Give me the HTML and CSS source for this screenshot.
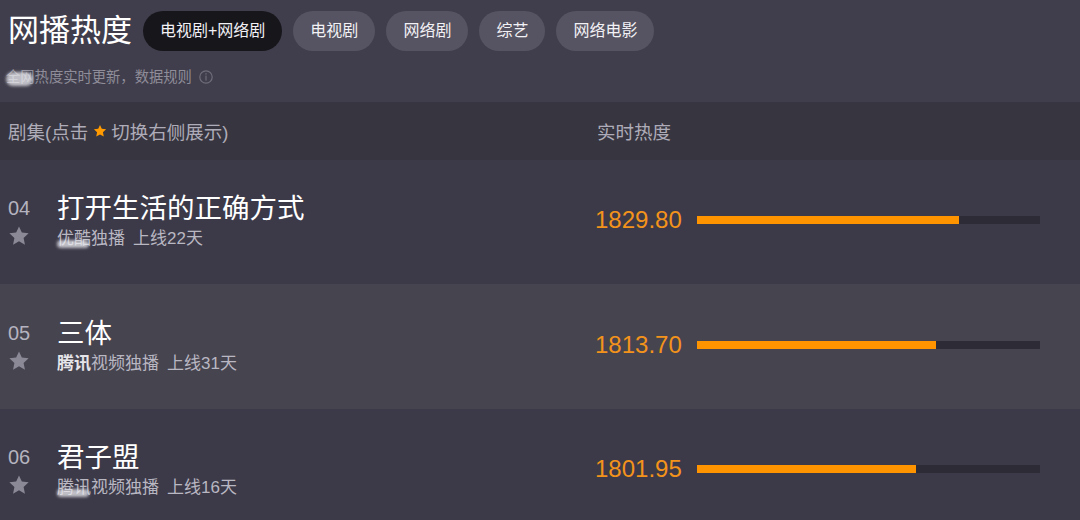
FILE: index.html
```html
<!DOCTYPE html>
<html lang="zh-CN">
<head>
  <meta charset="UTF-8">
  <title>网播热度</title>
  <link rel="stylesheet" href="styles.css">
</head>
<body>

  <div class="top">
    <div class="title-row">
      <h1>网播热度</h1>
      <div class="tabs">
        <span class="tab active">电视剧+网络剧</span>
        <span class="tab">电视剧</span>
        <span class="tab">网络剧</span>
        <span class="tab">综艺</span>
        <span class="tab">网络电影</span>
      </div>
    </div>
    <p class="note">
      <span class="smudge">全网</span>热度实时更新，数据规则
      <svg class="info" width="14" height="14" viewBox="0 0 14 14">
        <circle cx="7" cy="7" r="6.2" fill="none" stroke="#6f6d7a" stroke-width="1.2"/>
        <rect x="6.4" y="3.2" width="1.2" height="1.4" fill="#6f6d7a"/>
        <rect x="6.4" y="5.6" width="1.2" height="5" fill="#6f6d7a"/>
      </svg>
    </p>
  </div>

  <div class="thead">
    <div class="col-name">剧集(点击
      <svg class="mini-star" width="14" height="14" viewBox="0 0 24 24"><polygon points="12,1.5 15.1,8.3 22.5,9.1 17,14.1 18.5,21.5 12,17.8 5.5,21.5 7,14.1 1.5,9.1 8.9,8.3" fill="#ff9a00"/></svg>
      切换右侧展示)</div>
    <div class="col-heat">实时热度</div>
  </div>

  <div class="row">
    <div class="rank">
      <span class="num">04</span>
      <svg class="star" width="22" height="22" viewBox="0 0 24 24"><polygon points="12,1.5 15.1,8.3 22.5,9.1 17,14.1 18.5,21.5 12,17.8 5.5,21.5 7,14.1 1.5,9.1 8.9,8.3" fill="#8b8996"/></svg>
    </div>
    <div class="info-col">
      <div class="name">打开生活的正确方式</div>
      <div class="sub"><span class="smudge low">优酷</span>独播<span class="days">上线22天</span></div>
    </div>
    <div class="heat">
      <span class="value">1829.80</span>
      <div class="bar"><div class="fill" style="width: 76.4%"></div></div>
    </div>
  </div>

  <div class="row alt">
    <div class="rank">
      <span class="num">05</span>
      <svg class="star" width="22" height="22" viewBox="0 0 24 24"><polygon points="12,1.5 15.1,8.3 22.5,9.1 17,14.1 18.5,21.5 12,17.8 5.5,21.5 7,14.1 1.5,9.1 8.9,8.3" fill="#8b8996"/></svg>
    </div>
    <div class="info-col">
      <div class="name">三体</div>
      <div class="sub"><span class="bright">腾讯</span>视频独播<span class="days">上线31天</span></div>
    </div>
    <div class="heat">
      <span class="value">1813.70</span>
      <div class="bar"><div class="fill" style="width: 69.7%"></div></div>
    </div>
  </div>

  <div class="row">
    <div class="rank">
      <span class="num">06</span>
      <svg class="star" width="22" height="22" viewBox="0 0 24 24"><polygon points="12,1.5 15.1,8.3 22.5,9.1 17,14.1 18.5,21.5 12,17.8 5.5,21.5 7,14.1 1.5,9.1 8.9,8.3" fill="#8b8996"/></svg>
    </div>
    <div class="info-col">
      <div class="name">君子盟</div>
      <div class="sub"><span class="smudge low">腾讯</span>视频独播<span class="days">上线16天</span></div>
    </div>
    <div class="heat">
      <span class="value">1801.95</span>
      <div class="bar"><div class="fill" style="width: 63.8%"></div></div>
    </div>
  </div>

</body>
</html>
```

FILE: styles.css
```css
body {
  margin: 0;
  background: #3c3a48;
  font-family: "Liberation Sans", "Noto Sans CJK SC", sans-serif;
  color: #fff;
  overflow: hidden;
}

.top {
  height: 102px;
  box-sizing: border-box;
  padding: 11px 8px 0;
  background: #403e4c;
}
.title-row {
  display: flex;
  align-items: center;
  gap: 11px;
  height: 40px;
}
h1 {
  margin: 0;
  font-size: 31px;
  font-weight: normal;
  line-height: 40px;
  color: #fff;
}
.tabs {
  display: flex;
  gap: 11px;
}
.tab {
  height: 40px;
  line-height: 40px;
  padding: 0 17px;
  border-radius: 20px;
  background: #565462;
  color: #f2f1f5;
  font-size: 16px;
}
.tab.active { background: #17161b; }

.note {
  margin: 16px 0 0 -2px;
  font-size: 14.3px;
  line-height: 20px;
  color: #8f8d99;
  display: flex;
  align-items: center;
}
.info { margin-left: 7px; }

.smudge { position: relative; }
.smudge::after {
  content: "";
  position: absolute;
  left: 0;
  right: 2px;
  top: 5px;
  bottom: 1px;
  border-radius: 7px;
  background: rgba(235, 235, 240, 0.75);
  filter: blur(1.5px);
}
.smudge.low::after { top: 11px; bottom: 0; }
.bright { color: #e6e5ea; font-weight: bold; }

.thead {
  height: 58px;
  background: #37353f;
  display: flex;
  align-items: center;
  padding: 0 8px;
  font-size: 18.5px;
  color: #aeacb8;
}
.col-name {
  width: 589px;
  display: flex;
  align-items: center;
}
.mini-star { margin: 0 4px 0 5px; }

.row {
  height: 124px;
  display: flex;
  align-items: center;
  padding: 0 8px;
  background: #3c3a48;
}
.row.alt {
  height: 125px;
  background: #46444f;
}
.rank {
  width: 49px;
  display: flex;
  flex-direction: column;
  align-self: center;
  margin-top: -3px;
}
.rank .num {
  font-size: 20px;
  line-height: 28px;
  color: #b5b3bf;
}
.rank .star { margin-top: 3px; }

.info-col {
  width: 540px;
}
.name {
  font-size: 27.5px;
  line-height: 30px;
  color: #fff;
}
.sub {
  margin-top: 4px;
  font-size: 17px;
  line-height: 22px;
  color: #b9b7c2;
}
.days { margin-left: 8px; }

.heat {
  display: flex;
  align-items: center;
  margin-bottom: 4px;
}
.value {
  width: 102px;
  font-size: 24px;
  color: #f3931b;
  margin-left: -2px;
}
.bar {
  width: 343px;
  height: 8px;
  background: #2d2b35;
}
.fill {
  height: 100%;
  background: #ff9400;
}
```
